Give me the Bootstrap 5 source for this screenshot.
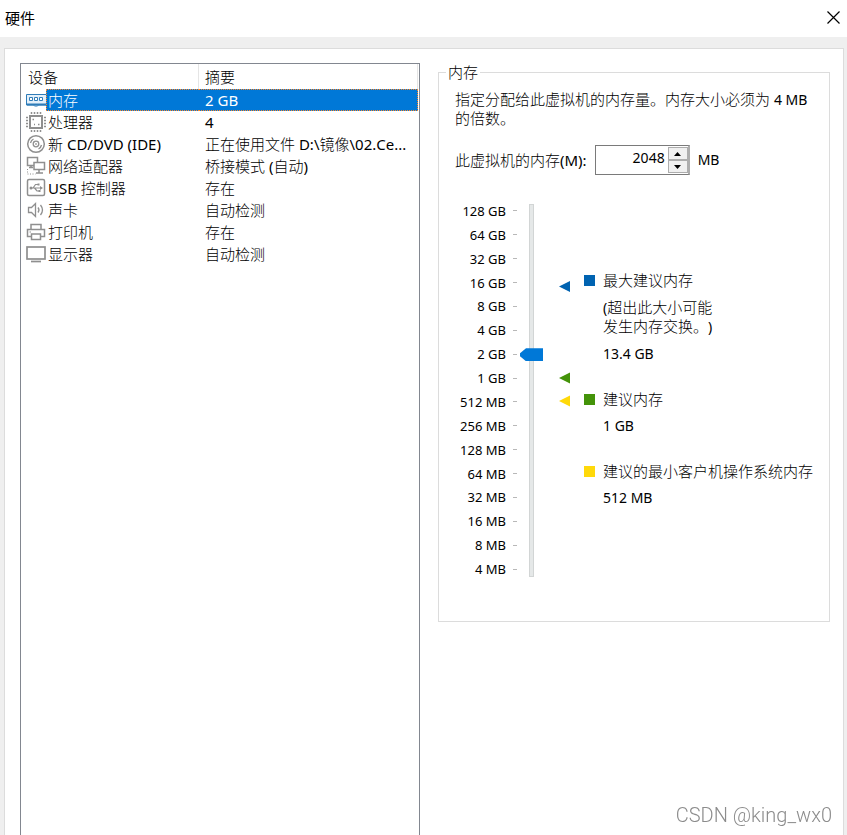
<!DOCTYPE html>
<html lang="zh-CN">
<head>
<meta charset="utf-8">
<meta name="viewport" content="width=device-width, initial-scale=1">
<title>硬件</title>
<link href="https://cdn.jsdelivr.net/npm/bootstrap@5.3.0/dist/css/bootstrap.min.css" rel="stylesheet">
<style>
body { font-family: "Noto Sans", "Noto Sans CJK SC", sans-serif; font-size: 15px; font-weight: 300; line-height: 18px; color: #000; background: #efefef; text-spacing-trim: space-all; font-feature-settings: "chws" 0, "halt" 0; }
.lat { font-size: 14px; font-weight: 400; }
.dev-table .lat, label .lat { font-size: 15px; }
.titlebar { height: 37px; padding: 0 7px 2px 5px; font-weight: 400; }
.close-btn { width: 13px; height: 13px; }
.frame { padding: 11px 3px 0 4px; }
.pane { border: 1px solid #dcdcdc; border-bottom: 0; padding: 14px 13px 0 15px; }
.split { display: grid; grid-template-columns: minmax(0, 400fr) minmax(0, 392fr); column-gap: 18px; }
.devices { border: 1px solid #828790; border-bottom: 0; padding-right: 1px; }
.dev-table { table-layout: fixed; border-collapse: separate; border-spacing: 0; }
.dev-table th { height: 25px; padding: 0 7px; font-weight: 300; border-right: 1px solid #e5e5e5; }
.dev-table th:last-child { padding-left: 6px; }
.dev-table td { height: 22px; padding: 0 6px 0 2px; line-height: 20px; }
.dev-table td:last-child { padding-left: 6px; }
.dev-table td.glyph { padding: 0 0 0 5px; }
.glyph svg { display: block; width: 20px; height: 20px; fill: none; stroke: #8f8f8f; }
.picked td:not(.glyph) { color: #fff; background: #0078d7; border-top: 1px dotted #ff8728; border-bottom: 1px dotted #ff8728; }
.picked td:nth-child(2) { border-left: 1px dotted #ff8728; padding-left: 1px; }
.picked td:last-child { border-right: 1px dotted #ff8728; }
.group { border: 1px solid #dcdcdc; padding: 0 7px 40px; }
.group legend { float: none; width: auto; margin: 0; padding: 0 2px; font-size: 15px; line-height: 18px; }
.group-body { padding: 9px 9px 0; }
.size-row { margin-top: 18px; }
.spinner { width: 95px; height: 30px; border: 1px solid #7a7a7a; border-right: 2px solid #adadad; padding: 1px 0; }
.spinner input { font-size: 14px; line-height: 18px; padding: 0 3px 4px; outline: 0; min-width: 0; font-weight: 400; }
.spinner button { width: 20px; height: 13px; border: 1px solid #adadad; background: #f0f0f0; }
.scale-row { margin-top: 24px; height: 382px; }
.ticks { display: grid; grid-template-rows: repeat(16, minmax(0, 1fr)); width: 64px; font-size: 13px; font-weight: 400; }
.ticks li::after { content: ""; width: 4px; height: 1px; margin-left: 7px; background: #b8b8b8; }
.track-box { width: 23px; margin-left: 3px; }
.mem-range { -webkit-appearance: none; appearance: none; flex: none; width: 373px; height: 23px; margin: 0; background: transparent; transform: rotate(-90deg); }
.mem-range::-webkit-slider-runnable-track { height: 5px; background: #e5e8e8; border: 1px solid #d2d5d5; }
.mem-range::-webkit-slider-thumb { -webkit-appearance: none; width: 13px; height: 23px; margin-top: -10px; background: #0078d7; clip-path: polygon(5px 0, 8px 0, 13px 6px, 13px 23px, 0 23px, 0 6px); }
.pointers { width: 12px; height: 382px; margin-left: 16px; flex: none; }
.hints { margin: 72px 0 0 13px; }
.hints dt { font-weight: 300; }
.hints dd { margin: 9px 0 0 19px; }
.hints dt:not(:first-child) { margin-top: 27px; }
.sw { width: 11px; height: 11px; margin-right: 8px; }
.sw-max { background: #0063b1; }
.sw-rec { background: #449309; }
.sw-min { background: #ffd90a; }
.stamp { right: 15px; bottom: 8px; font: 300 20px/24px Roboto, sans-serif; color: #8c8c8c; }
</style>
</head>
<body class="min-vh-100 d-flex flex-column">
<header class="titlebar bg-white d-flex align-items-center justify-content-between">
  <span>硬件</span>
  <button type="button" class="close-btn btn border-0 p-0 d-flex" aria-label="关闭">
    <svg width="13" height="13" viewBox="0 0 13 13" stroke="#000" stroke-width="1.2"><path d="M.5.5l12 12M12.5.5l-12 12"/></svg>
  </button>
</header>
<main class="frame flex-grow-1 d-flex">
  <div class="pane bg-white flex-grow-1 d-flex">
    <div class="split flex-grow-1">
      <section class="devices">
        <table class="dev-table w-100">
          <colgroup><col style="width:25px"><col style="width:153px"><col></colgroup>
          <thead><tr><th colspan="2" scope="col">设备</th><th scope="col">摘要</th></tr></thead>
          <tbody>
            <tr class="picked"><td class="glyph"><svg viewBox="0 0 20 20"><path d="M.5 4.500h20v10.500h-8l-1 1h-3l-1-1h-7z" fill="#e4f0fa" stroke="#2f7cb8"/><path d="M1 14.500h19" stroke="#2f7cb8" stroke-width="2"/><path d="M3.500 7.500h3v3h-3zM8.500 7.500h3v3h-3zM13.500 7.500h3v3h-3z" stroke="#2f7cb8" fill="#fff"/></svg></td><td>内存</td><td class="lat">2 GB</td></tr>
            <tr><td class="glyph"><svg viewBox="0 0 20 20"><rect x="4" y="4" width="12" height="12" stroke-width="2"/><path d="M5.500 0v2m3-2v2m3-2v2m3-2v2M5.500 18v2m3-2v2m3-2v2m3-2v2M0 5.500h2m-2 3h2m-2 3h2m-2 3h2M18 5.500h2m-2 3h2m-2 3h2m-2 3h2" stroke-width="1.500"/><path d="M6.500 7.500h1.500m4 5h1.500m-5.500 0h1" stroke-width="1.500"/></svg></td><td>处理器</td><td class="lat">4</td></tr>
            <tr><td class="glyph"><svg viewBox="0 0 20 20"><circle cx="10" cy="10" r="8.300" stroke-width="1.500"/><circle cx="10" cy="10" r="2.800" stroke-width="1.300"/><circle cx="10" cy="10" r=".5"/><path d="M4.500 9a6 6 0 0 1 3-4M15.500 11a6 6 0 0 1-3 4" stroke-width="1.300"/></svg></td><td>新 <span class="lat">CD/DVD (IDE)</span></td><td class="text-nowrap">正在使用文件 <span class="lat">D:\</span>镜像<span class="lat">\02.Ce...</span></td></tr>
            <tr><td class="glyph"><svg viewBox="0 0 20 20"><path d="M9 9.500H1.500v-8h10V6M5 9.500v2M3 11.500h4" stroke-width="1.500"/><rect x="8" y="6.500" width="10.500" height="7" stroke-width="1.500" fill="#fff"/><path d="M13 14v3M10 17h7" stroke-width="1.500"/><path d="M1.500 13v5h8" stroke-dasharray="1 1.500"/></svg></td><td>网络适配器</td><td>桥接模式 <span class="lat">(</span>自动<span class="lat">)</span></td></tr>
            <tr><td class="glyph"><svg viewBox="0 0 20 20"><rect x="1.500" y="1.500" width="17" height="16" rx="1.500" stroke-width="1.500"/><path d="M5 10h10M7 10l2.500-3.500H12M8.500 10l2.500 3h2" stroke-width="1.200"/><path d="M14 8l3 2-3 2zM11.500 5.500h2v2h-2zM12.500 12h2v2h-2z" fill="#8f8f8f" stroke="none"/><circle cx="5" cy="10" r="1.500" fill="#8f8f8f" stroke="none"/></svg></td><td><span class="lat">USB</span> 控制器</td><td>存在</td></tr>
            <tr><td class="glyph"><svg viewBox="0 0 20 20"><path d="M2.500 7.500h3l4-4v13l-4-4h-3zM12 7.500q2 2.500 0 5M14.500 5q4 5 0 10" stroke-width="1.300"/></svg></td><td>声卡</td><td>自动检测</td></tr>
            <tr><td class="glyph"><svg viewBox="0 0 20 20"><path d="M5 7V2.500h10V7M5 14.500H1.500V7.500h17v7H15" stroke-width="1.500"/><rect x="5.500" y="12" width="9" height="5.500" stroke-width="1.500"/><path d="M3.500 10h1.500"/></svg></td><td>打印机</td><td>存在</td></tr>
            <tr><td class="glyph"><svg viewBox="0 0 20 20"><rect x="1" y="3" width="18" height="12" stroke-width="1.700"/><path d="M5 17.500h10" stroke-width="1.700"/></svg></td><td>显示器</td><td>自动检测</td></tr>
          </tbody>
        </table>
      </section>
      <section>
        <fieldset class="group">
          <legend>内存</legend>
          <div class="group-body">
            <p class="mb-0">指定分配给此虚拟机的内存量。内存大小必须为 <span class="lat">4 MB</span> 的倍数。</p>
            <div class="size-row d-flex align-items-center">
              <label for="mem">此虚拟机的内存<span class="lat">(M):</span></label>
              <div class="spinner d-flex ms-2 me-2">
                <input id="mem" class="border-0 text-end flex-grow-1 w-100" type="text" value="2048">
                <div class="d-flex flex-column">
                  <button type="button" class="p-0 d-flex align-items-center justify-content-center" aria-label="增加"><svg width="7" height="4"><path d="M0 4l3.500-4L7 4z"/></svg></button>
                  <button type="button" class="p-0 d-flex align-items-center justify-content-center" aria-label="减少"><svg width="7" height="4"><path d="M0 0l3.500 4L7 0z"/></svg></button>
                </div>
              </div>
              <span class="lat">MB</span>
            </div>
            <div class="scale-row d-flex">
              <ul class="ticks list-unstyled mb-0">
                <li class="d-flex align-items-center justify-content-end">128 GB</li>
                <li class="d-flex align-items-center justify-content-end">64 GB</li>
                <li class="d-flex align-items-center justify-content-end">32 GB</li>
                <li class="d-flex align-items-center justify-content-end">16 GB</li>
                <li class="d-flex align-items-center justify-content-end">8 GB</li>
                <li class="d-flex align-items-center justify-content-end">4 GB</li>
                <li class="d-flex align-items-center justify-content-end">2 GB</li>
                <li class="d-flex align-items-center justify-content-end">1 GB</li>
                <li class="d-flex align-items-center justify-content-end">512 MB</li>
                <li class="d-flex align-items-center justify-content-end">256 MB</li>
                <li class="d-flex align-items-center justify-content-end">128 MB</li>
                <li class="d-flex align-items-center justify-content-end">64 MB</li>
                <li class="d-flex align-items-center justify-content-end">32 MB</li>
                <li class="d-flex align-items-center justify-content-end">16 MB</li>
                <li class="d-flex align-items-center justify-content-end">8 MB</li>
                <li class="d-flex align-items-center justify-content-end">4 MB</li>
              </ul>
              <div class="track-box d-flex align-items-center justify-content-center">
                <input class="mem-range" type="range" min="0" max="15" value="9" aria-label="内存">
              </div>
              <svg class="pointers" viewBox="0 0 12 382"><path d="M0 87.500l11-5.500v11z" fill="#0063b1"/><path d="M0 179l11-5.500v11z" fill="#449309"/><path d="M0 202l11-5.500v11z" fill="#ffd90a"/></svg>
              <dl class="hints">
                <dt class="d-flex align-items-center"><span class="sw sw-max"></span>最大建议内存</dt>
                <dd><span class="lat">(</span>超出此大小可能<br>发生内存交换。<span class="lat">)</span></dd>
                <dd class="lat">13.4 GB</dd>
                <dt class="d-flex align-items-center"><span class="sw sw-rec"></span>建议内存</dt>
                <dd class="lat">1 GB</dd>
                <dt class="d-flex align-items-center text-nowrap"><span class="sw sw-min"></span>建议的最小客户机操作系统内存</dt>
                <dd class="lat">512 MB</dd>
              </dl>
            </div>
          </div>
        </fieldset>
      </section>
    </div>
  </div>
</main>
<div class="stamp position-fixed">CSDN @king_wx0</div>
<script src="https://cdn.jsdelivr.net/npm/bootstrap@5.3.0/dist/js/bootstrap.bundle.min.js"></script>
</body>
</html>
